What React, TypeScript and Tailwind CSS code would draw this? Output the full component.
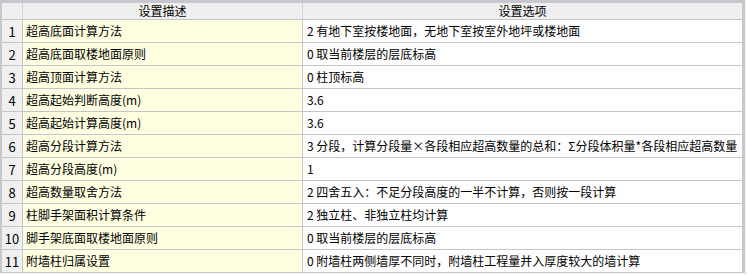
import React from 'react';

const rows: [string, string][] = [
    ['超高底面计算方法', '2 有地下室按楼地面，无地下室按室外地坪或楼地面'],
    ['超高底面取楼地面原则', '0 取当前楼层的层底标高'],
    ['超高顶面计算方法', '0 柱顶标高'],
    ['超高起始判断高度(m)', '3.6'],
    ['超高起始计算高度(m)', '3.6'],
    ['超高分段计算方法', '3 分段，计算分段量×各段相应超高数量的总和：Σ分段体积量*各段相应超高数量'],
    ['超高分段高度(m)', '1'],
    ['超高数量取舍方法', '2 四舍五入：不足分段高度的一半不计算，否则按一段计算'],
    ['柱脚手架面积计算条件', '2 独立柱、非独立柱均计算'],
    ['脚手架底面取楼地面原则', '0 取当前楼层的层底标高'],
    ['附墙柱归属设置', '0 附墙柱两侧墙厚不同时，附墙柱工程量并入厚度较大的墙计算'],
];

const font = { fontFamily: '"Noto Sans CJK SC", "Liberation Sans", sans-serif' };

const App: React.FC = () => {
    return (
        <div className="w-[747px] h-[275px] bg-[#f7f7f7] overflow-hidden text-[12px] text-black" style={font}>
            <div className="w-[745px] border-t-[3px] border-l-2 border-r-[3px] border-[#c6c8ce] bg-white">
                <div className="flex h-[17px] bg-[#efefef] border-b border-[#c4c6cc]">
                    <div className="w-[21px] border-r border-[#d4d6da]" />
                    <div className="w-[280px] border-r border-[#d4d6da] flex items-center justify-center leading-none">设置描述</div>
                    <div className="flex-1 flex items-center justify-center leading-none">设置选项</div>
                </div>
                {rows.map(([desc, value], i) => (
                    <div key={i} className="flex h-[23px] border-b border-[#c4c6cc]">
                        <div className="w-[21px] bg-[#f0f0f0] border-r border-[#c4c6cc] flex items-center justify-center text-[13px] leading-none">{i + 1}</div>
                        <div className="w-[280px] bg-[#ffffe1] border-r border-[#c4c6cc] flex items-center pl-[3px] whitespace-nowrap leading-none">{desc}</div>
                        <div className="flex-1 flex items-center pl-[4px] whitespace-nowrap leading-none">{value}</div>
                    </div>
                ))}
            </div>
        </div>
    );
};

export default App;
